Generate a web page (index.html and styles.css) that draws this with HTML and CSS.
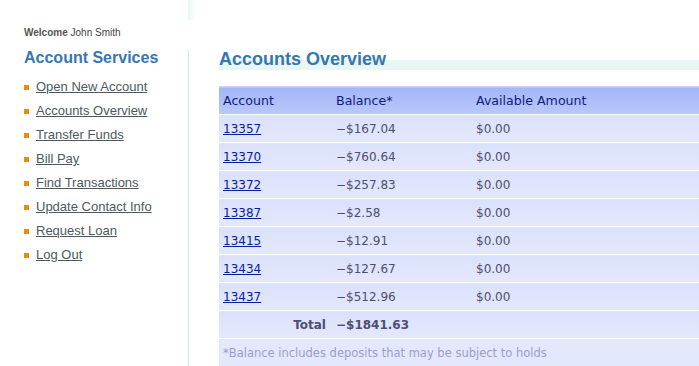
FILE: index.html
```html
<!DOCTYPE html>
<html>
<head>
<meta charset="utf-8">
<link rel="stylesheet" href="styles.css">
</head>
<body>
<div class="page">
  <aside class="sidebar">
    <div class="top-shade"></div>
    <p class="welcome"><b>Welcome</b> John Smith</p>
    <div class="nav-box">
      <h2 class="nav-title">Account Services</h2>
      <ul class="nav">
        <li><a href="#">Open New Account</a></li>
        <li><a href="#">Accounts Overview</a></li>
        <li><a href="#">Transfer Funds</a></li>
        <li><a href="#">Bill Pay</a></li>
        <li><a href="#">Find Transactions</a></li>
        <li><a href="#">Update Contact Info</a></li>
        <li><a href="#">Request Loan</a></li>
        <li><a href="#">Log Out</a></li>
      </ul>
    </div>
  </aside>
  <main class="content">
    <h1 class="title">Accounts Overview</h1>
    <table class="accounts">
      <thead>
        <tr><th class="c1">Account</th><th class="c2">Balance*</th><th class="c3">Available Amount</th></tr>
      </thead>
      <tbody>
        <tr><td><a href="#">13357</a></td><td>−$167.04</td><td>$0.00</td></tr>
        <tr><td><a href="#">13370</a></td><td>−$760.64</td><td>$0.00</td></tr>
        <tr><td><a href="#">13372</a></td><td>−$257.83</td><td>$0.00</td></tr>
        <tr><td><a href="#">13387</a></td><td>−$2.58</td><td>$0.00</td></tr>
        <tr><td><a href="#">13415</a></td><td>−$12.91</td><td>$0.00</td></tr>
        <tr><td><a href="#">13434</a></td><td>−$127.67</td><td>$0.00</td></tr>
        <tr><td><a href="#">13437</a></td><td>−$512.96</td><td>$0.00</td></tr>
        <tr class="total"><td class="total-label">Total</td><td>−$1841.63</td><td></td></tr>
      </tbody>
      <tfoot>
        <tr><td colspan="3" class="note">*Balance includes deposits that may be subject to holds</td></tr>
      </tfoot>
    </table>
  </main>
</div>
</body>
</html>
```
FILE: styles.css
```css
html, body {
  margin: 0;
  padding: 0;
  background: #fff;
  overflow: hidden;
}
.page {
  display: flex;
  width: 699px;
  height: 366px;
  overflow: hidden;
  font-family: "Liberation Sans", Arial, sans-serif;
}
.sidebar {
  width: 189px;
  flex: none;
  display: flex;
  flex-direction: column;
}
.top-shade {
  align-self: flex-end;
  width: 8px;
  height: 20px;
  margin-right: -7px;
  background: linear-gradient(to right, #eaf6f4, #ffffff);
}
.welcome {
  margin: 6px 0 0 24px;
  font-size: 10px;
  color: #444;
  line-height: 13px;
}
.welcome b {
  color: #555;
}
.nav-box {
  flex: 1;
  margin-top: 11px;
  border-right: 1px solid #cdece6;
  padding-left: 24px;
}
.nav-title {
  margin: 0;
  padding-top: 0;
  font-size: 16px;
  line-height: 16px;
  color: #3577b5;
  font-weight: bold;
}
.nav {
  list-style: none;
  margin: 12px 0 0 0;
  padding: 0;
}
.nav li {
  height: 24px;
  line-height: 17px;
  font-size: 13px;
  display: flex;
  align-items: flex-start;
}
.nav li::before {
  content: "";
  width: 5px;
  height: 5px;
  background: #e88c0a;
  margin: 7px 7px 0 0;
  flex: none;
}
.nav a {
  color: #4b5a5c;
  text-decoration: underline;
}
.content {
  flex: 1;
  padding-left: 30px;
  min-width: 0;
}
.title {
  margin: 49px 0 0 0;
  font-size: 18px;
  line-height: 20px;
  color: #3577b0;
  font-weight: bold;
  background: linear-gradient(to bottom, transparent 0, transparent 11px, #e8f6f4 11px, #e8f6f4 21px, transparent 21px);
  height: 22px;
}
.accounts {
  margin-top: 15px;
  border-collapse: collapse;
  width: 520px;
  font-family: "DejaVu Sans", Verdana, sans-serif;
  font-size: 12px;
}
.accounts th {
  text-align: left;
  font-weight: normal;
  font-size: 12.6px;
  color: #101c7c;
  height: 28px;
  padding: 0 0 0 4px;
  background: linear-gradient(to bottom, #c9d3fb 0, #c9d3fb 1px, #a3b6f8 2px, #b9c8fa 100%);
  border-bottom: 1px solid #fff;
}
.c1 { width: 109px; }
.c2 { width: 136px; }
.accounts td {
  height: 27px;
  padding: 0 0 0 4px;
  background: linear-gradient(to bottom, #dae1fb, #e3e8fc);
  border-bottom: 1px solid #fff;
  color: #4e4e72;
}
.accounts td a {
  color: #0b1c9a;
  text-decoration: underline;
}
.accounts .total td {
  font-weight: bold;
}
.accounts .total-label {
  text-align: right;
  padding-right: 6px;
}
.accounts .note {
  color: #9b9dcf;
  font-size: 11.5px;
  background: #e4e8fc;
}
```
